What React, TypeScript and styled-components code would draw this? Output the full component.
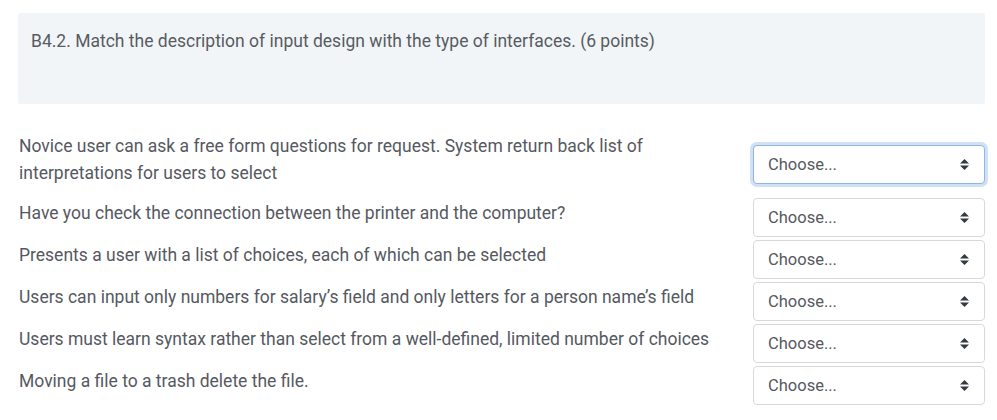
import React from "react";
import styled, { createGlobalStyle } from "styled-components";

const GlobalStyle = createGlobalStyle`
  html, body {
    margin: 0;
    padding: 0;
    background: #ffffff;
  }
  body {
    font-family: Roboto, "Liberation Sans", Arial, sans-serif;
    color: #55595f;
  }
`;

const Page = styled.div`
  padding: 13px 12px 0 18px;
`;

const QuestionText = styled.div`
  background: #f2f5f8;
  border-radius: 2px;
  height: 91px;
  box-sizing: border-box;
  padding: 16px 13px;
  font-size: 17.5px;
  line-height: 24px;
  color: #575c62;
`;

const Answers = styled.div`
  margin-top: 29px;
  display: flex;
  flex-direction: column;
`;

const Row = styled.div`
  display: flex;
  align-items: center;
  padding-bottom: 3px;
`;

const Label = styled.div`
  flex: 1;
  padding: 0 21px 8px 1px;
  font-size: 17.5px;
  line-height: 27px;
  color: #55595f;
`;

const SelectBox = styled.div<{ $focused?: boolean }>`
  width: 232px;
  height: 39px;
  box-sizing: border-box;
  flex-shrink: 0;
  display: flex;
  align-items: center;
  justify-content: space-between;
  padding: 0 15px 0 14px;
  background: #fff;
  border: 1px solid ${(p) => (p.$focused ? "#8db6e3" : "#d6d9dc")};
  border-radius: 4px;
  box-shadow: ${(p) => (p.$focused ? "0 0 0 3px rgba(120, 170, 225, 0.35)" : "none")};
  font-size: 16.5px;
  color: #55595f;
`;

const Arrows = styled.svg`
  width: 9px;
  height: 11px;
  display: block;
`;

const rows = [
  "Novice user can ask a free form questions for request. System return back list of interpretations for users to select",
  "Have you check the connection between the printer and the computer?",
  "Presents a user with a list of choices, each of which can be selected",
  "Users can input only numbers for salary\u2019s field and only letters for a person name\u2019s field",
  "Users must learn syntax rather than select from a well-defined, limited number of choices",
  "Moving a file to a trash delete the file.",
];

function Select({ focused }: { focused?: boolean }) {
  return (
    <SelectBox $focused={focused}>
      <span>Choose...</span>
      <Arrows viewBox="0 0 4 5" preserveAspectRatio="none">
        <path d="M2 0L0 2h4zm0 5L0 3h4z" fill="#343a40" />
      </Arrows>
    </SelectBox>
  );
}

export default function App() {
  return (
    <>
      <GlobalStyle />
      <Page>
        <QuestionText>
          B4.2. Match the description of input design with the type of interfaces. (6 points)
        </QuestionText>
        <Answers>
          {rows.map((text, i) => (
            <Row key={i}>
              <Label>{text}</Label>
              <Select focused={i === 0} />
            </Row>
          ))}
        </Answers>
      </Page>
    </>
  );
}
